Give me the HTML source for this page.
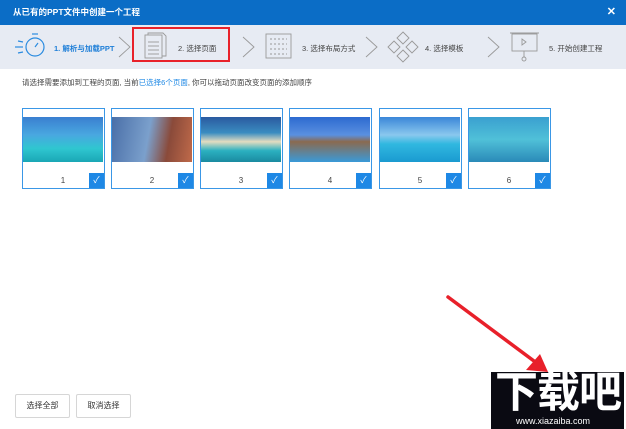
<!DOCTYPE html>
<html><head><meta charset="utf-8"><style>
*{margin:0;padding:0;box-sizing:border-box}
body{width:626px;height:429px;background:#fff;position:relative;overflow:hidden;font-family:"Liberation Sans","Noto Sans CJK SC",sans-serif;font-size:8px;color:#333}
.a{position:absolute}
.title{left:0;top:0;width:626px;height:25px;background:#0b6dc6;color:#fff;font-weight:bold;font-size:8.5px;line-height:25px;padding-left:13px}
.steps{left:0;top:25px;width:626px;height:44px;background:#e7ebf3}
.st{font-size:7.5px;color:#444;top:43px}
.card{width:83px;height:81px;border:1.5px solid #3a97e6;background:#fff;top:108px}
.img{position:absolute;left:0;top:8px;width:80px;height:45px}
.num{position:absolute;left:0;width:80px;text-align:center;top:67px;font-size:8px;color:#444}
.chk{position:absolute;right:0;bottom:0;width:15px;height:15px;background:#1e88e5;color:#fff;font-size:9px;text-align:center;line-height:15px}
.btn{top:394px;width:55px;height:24px;border:1px solid #d6d6d6;border-radius:2px;text-align:center;line-height:22px;font-size:8px;color:#333;background:#fff}
</style></head><body>
<div class="a title">从已有的PPT文件中创建一个工程</div>
<div class="a" style="right:10px;top:5px;color:#fff;font-size:11px;font-weight:bold">✕</div>
<div class="a steps"></div>
<svg class="a" style="left:0;top:25px" width="626" height="44">
<g fill="none" stroke="#2a8be0" stroke-width="1.2"><circle cx="35" cy="22" r="9"/><line x1="35" y1="22" x2="38" y2="18"/><line x1="32" y1="9" x2="38" y2="9"/><line x1="15" y1="22" x2="23" y2="22"/><line x1="18" y1="16" x2="23" y2="17"/><line x1="18" y1="28" x2="23" y2="27"/></g>
<g fill="none" stroke="#999" stroke-width="0.9">
<polyline points="119,12 130,22 119,32"/><polyline points="243,12 254,22 243,32"/><polyline points="366,12 377,22 366,32"/><polyline points="488,12 499,22 488,32"/>
<rect x="145" y="10" width="17" height="23"/><path d="M148 10v-2h15l3 3v20h-4"/><line x1="148" y1="17" x2="159" y2="17"/><line x1="148" y1="21" x2="159" y2="21"/><line x1="148" y1="25" x2="159" y2="25"/><line x1="148" y1="29" x2="159" y2="29"/>
<rect x="266" y="9" width="25" height="24"/><path d="M270 14h17M270 19h17M270 24h17M270 29h17" stroke-dasharray="2 2"/>
<path d="M403 7l6 6-6 6-6-6zM403 25l6 6-6 6-6-6zM394 16l6 6-6 6-6-6zM412 16l6 6-6 6-6-6z"/>
<rect x="512" y="9" width="25" height="17"/><line x1="510" y1="8" x2="539" y2="8"/><line x1="524" y1="26" x2="524" y2="32"/><circle cx="524" cy="34" r="2"/><path d="M522 14l4 3-4 3z"/>
</g></svg>
<div class="a st" style="left:54px;color:#1f7fd8;font-weight:bold">1. 解析与加载PPT</div>
<div class="a st" style="left:178px">2. 选择页面</div>
<div class="a st" style="left:302px">3. 选择布局方式</div>
<div class="a st" style="left:425px">4. 选择模板</div>
<div class="a st" style="left:549px">5. 开始创建工程</div>
<div class="a" style="left:132px;top:27px;width:98px;height:35px;border:2px solid #e8212a"></div>
<div class="a" style="left:22px;top:77px;font-size:7.5px;color:#444">请选择需要添加到工程的页面, 当前<span style="color:#1e88e5">已选择6个页面</span>, 你可以拖动页面改变页面的添加顺序</div>

<div class="a card" style="left:22px"><div class="img" style="background:linear-gradient(#3a7fd0,#49a8e0 40%,#2fc6d0 70%,#1aa7b5)"></div><div class="num">1</div><div class="chk">✓</div></div>
<div class="a card" style="left:111px"><div class="img" style="background:linear-gradient(100deg,#4a6fa8,#7ba0cc 45%,#8a4a3a 70%,#c06a4a)"></div><div class="num">2</div><div class="chk">✓</div></div>
<div class="a card" style="left:200px"><div class="img" style="background:linear-gradient(#2a5aa0,#3a8cc0 35%,#e4dcc0 55%,#2bb0c0 75%,#1a8aa0)"></div><div class="num">3</div><div class="chk">✓</div></div>
<div class="a card" style="left:289px"><div class="img" style="background:linear-gradient(#2d6ad0,#5a90e0 40%,#8a6a50 55%,#3a9ad8)"></div><div class="num">4</div><div class="chk">✓</div></div>
<div class="a card" style="left:379px"><div class="img" style="background:linear-gradient(#3a86d8,#8ac8ee 40%,#30b8e0 60%,#1a9ad0)"></div><div class="num">5</div><div class="chk">✓</div></div>
<div class="a card" style="left:468px"><div class="img" style="background:linear-gradient(#3aa0d0,#50c0d8 50%,#2a8ab8)"></div><div class="num">6</div><div class="chk">✓</div></div>

<div class="a btn" style="left:15px">选择全部</div>
<div class="a btn" style="left:76px">取消选择</div>

<div class="a" style="left:491px;top:372px;width:133px;height:57px;background:#0a0a12"></div>
<div class="a" style="left:495px;top:369px;color:#fff;font-size:43px;font-weight:bold;letter-spacing:-1px;line-height:48px">下载吧</div>
<div class="a" style="left:516px;top:416px;color:#fff;font-size:9px">www.xiazaiba.com</div>
<svg class="a" style="left:440px;top:290px" width="120" height="100">
<line x1="8" y1="7" x2="98" y2="74" stroke="#e8202a" stroke-width="3.5" stroke-linecap="round"/>
<polygon points="108,82 86,80 100,64" fill="#e8202a"/></svg>
</body></html>
